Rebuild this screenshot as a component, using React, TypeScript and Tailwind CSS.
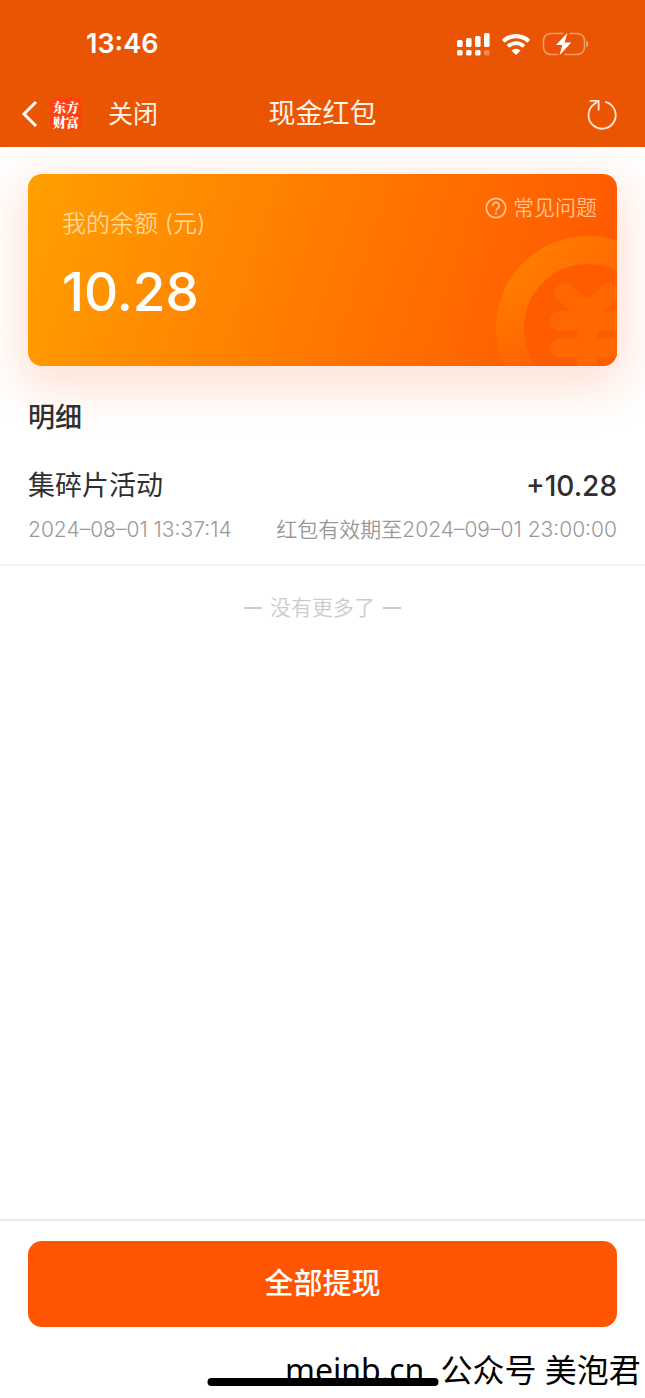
import type { ReactNode } from 'react';

const records = [
  {
    title: '集碎片活动',
    amount: '+10.28',
    time: '2024–08–01 13:37:14',
    expires: '红包有效期至2024–09–01 23:00:00',
  },
];

const signalBars = [
  { x: 0, y: 7, h: 7 },
  { x: 9, y: 5, h: 9 },
  { x: 18, y: 3, h: 11 },
  { x: 27, y: 0, h: 14 },
];

const SignalIcon = () => (
  <svg width="33" height="23" viewBox="0 0 33 23" fill="#fff">
    {signalBars.map((bar, i) => (
      <g key={bar.x}>
        <rect x={bar.x} y={bar.y} width="5.6" height={bar.h} rx="1.6" />
        <rect x={bar.x} y="17" width="5.6" height="5.6" rx="1.6" opacity={i === 3 ? 0.3 : 1} />
      </g>
    ))}
  </svg>
);

const WifiIcon = () => (
  <svg width="28" height="21" viewBox="0 0 28 21" fill="none" stroke="#fff">
    <path d="M1.2 7.2A18.6 18.6 0 0 1 26.8 7.2" strokeWidth="4.2" />
    <path d="M6 12.3A11.6 11.6 0 0 1 22 12.3" strokeWidth="3.8" />
    <path d="M9.4 16.6A6.4 6.4 0 0 1 18.6 16.6L14 21Z" fill="#fff" stroke="none" />
  </svg>
);

const BatteryIcon = () => (
  <svg width="47" height="24" viewBox="0 0 47 24" fill="none">
    <path
      d="M21.5 1.5H8.5A7 7 0 0 0 1.5 8.5V15.5A7 7 0 0 0 8.5 22.5H16M27.5 1.5H35.5A7 7 0 0 1 42.5 8.5V15.5A7 7 0 0 1 35.5 22.5H22.5"
      stroke="#fff"
      strokeOpacity="0.42"
      strokeWidth="1.6"
    />
    <path d="M44.4 8.6C46.8 9.6 46.8 14.4 44.4 15.4Z" fill="#fff" fillOpacity="0.5" />
    <path d="M4.5 8A3.5 3.5 0 0 1 8 4.5H19L11 14H17L14.5 19.5H8A3.5 3.5 0 0 1 4.5 16Z" fill="#f04e0c" />
    <path d="M25.5 0.8L14 13H20.3L17.6 23.2L29.2 10.6H22.6Z" fill="#fff" />
  </svg>
);

const RefreshIcon = () => (
  <svg width="30" height="31" viewBox="0 0 30 31" fill="none" stroke="#ffe6d2" strokeWidth="1.8">
    <path d="M18.2 2.9A13.6 13.6 0 1 1 7 5.2L11.2 2" />
    <path d="M2.6 1.9H11.6V11.4" />
  </svg>
);

const CoinMark = () => (
  <svg
    className="absolute bottom-0 right-0"
    width="121"
    height="130"
    viewBox="0 0 121 130"
    fill="none"
    aria-hidden="true"
  >
    <defs>
      <linearGradient id="coin-ring" x1="10" y1="30" x2="110" y2="90" gradientUnits="userSpaceOnUse">
        <stop stopColor="#ff7e00" />
        <stop offset="1" stopColor="#ff6800" />
      </linearGradient>
      <linearGradient id="coin-fade" x1="0" y1="50" x2="0" y2="130" gradientUnits="userSpaceOnUse">
        <stop stopColor="#fff" />
        <stop offset="1" stopColor="#fff" stopOpacity="0.3" />
      </linearGradient>
      <mask id="coin-mask" maskUnits="userSpaceOnUse" x="0" y="0" width="121" height="130">
        <rect width="121" height="130" fill="url(#coin-fade)" />
      </mask>
    </defs>
    <circle cx="92" cy="92" r="64" fill="#ff5c00" />
    <g mask="url(#coin-mask)">
      <circle cx="92" cy="92" r="78" stroke="url(#coin-ring)" strokeWidth="28" />
    </g>
    <path
      d="M69 57L91 76L113 57M64 85H121M64 112H121M91 74V130"
      stroke="#ff6800"
      strokeWidth="20"
      strokeLinecap="round"
      strokeLinejoin="round"
    />
  </svg>
);

const StatusBar = () => (
  <div className="flex h-20 items-center justify-between pl-[86px] pr-14 pt-2">
    <span className="font-['Inter'] text-[27px] font-semibold leading-8">13:46</span>
    <div className="flex items-center gap-3">
      <SignalIcon />
      <WifiIcon />
      <BatteryIcon />
    </div>
  </div>
);

const NavBar = () => (
  <nav className="grid h-[67px] grid-cols-[1fr_auto_1fr] items-center px-5 pt-px">
    <div className="flex items-center">
      <button type="button" aria-label="返回" className="flex items-center gap-3">
        <svg width="18" height="28" viewBox="0 0 18 28" fill="none" stroke="#fff" strokeWidth="3">
          <path d="M16 2L4 14L16 26" />
        </svg>
        <span className="flex size-8 items-center justify-center rounded-md bg-[#ff4310]">
          <span className="w-7 break-all text-center font-['Noto_Serif_CJK_SC','Noto_Sans_CJK_SC',sans-serif] text-[13px] font-black leading-[15px]">
            东方财富
          </span>
        </span>
      </button>
      <button type="button" className="ml-[26px] text-[25px] leading-9 text-[#fff3e6]">
        关闭
      </button>
    </div>
    <h1 className="text-[27px] leading-9 text-[#fff3e6]">现金红包</h1>
    <button type="button" aria-label="刷新" className="mr-2 justify-self-end">
      <RefreshIcon />
    </button>
  </nav>
);

const BalanceCard = () => (
  <section className="mx-7 mt-[27px] rounded-[14px] shadow-[0_14px_48px_8px_rgba(255,85,0,0.18)]">
    <div className="relative flex h-48 items-start justify-between overflow-hidden rounded-[14px] bg-linear-[108deg,#ffa000_0%,#ff7800_52%,#ff5500_100%] pl-[34px] pr-5">
      <CoinMark />
      <div className="pt-8">
        <p className="text-2xl font-[350] leading-9 text-[#ffd699]">我的余额 (元)</p>
        <p className="mt-4 font-['Inter'] text-[53px] font-medium leading-[68px] text-white">10.28</p>
      </div>
      <a
        href="#faq"
        className="relative mt-[18px] flex items-center gap-[6px] text-[21px] font-[350] leading-8 text-[#ffc599]"
      >
        <svg width="22" height="22" viewBox="0 0 22 22" fill="none" stroke="currentColor" strokeWidth="1.7">
          <circle cx="11" cy="11" r="9.7" />
          <path d="M7.8 8.8A3.2 3.2 0 1 1 12.7 11.4C11.5 12.2 11 12.6 11 14" />
          <path d="M11 15.3V17.2" />
        </svg>
        常见问题
      </a>
    </div>
  </section>
);

const Divider = ({ children }: { children: ReactNode }) => (
  <div className="flex items-center justify-center gap-2 text-[#ccc]">
    <span className="h-[2px] w-[18px] bg-current" />
    <span className="text-[21px] font-[350] leading-8">{children}</span>
    <span className="h-[2px] w-[18px] bg-current" />
  </div>
);

export default function App() {
  return (
    <div className="flex min-h-screen flex-col overflow-hidden bg-white font-['Inter','Noto_Sans_CJK_SC',sans-serif] text-[#2f2f2f]">
      <header className="relative z-10 bg-[#ea5504] text-white">
        <StatusBar />
        <NavBar />
      </header>

      <main className="flow-root flex-1">
        <BalanceCard />

        <h2 className="relative mt-8 px-7 text-[27px] font-medium leading-10">明细</h2>

        <ul className="mt-7">
          {records.map((record) => (
            <li key={record.time} className="border-b-2 border-[#f4f4f4] px-7 pb-[18px]">
              <div className="flex items-center justify-between leading-10">
                <span className="text-[27px]">{record.title}</span>
                <span className="text-[28px] font-medium">{record.amount}</span>
              </div>
              <div className="mt-2 flex items-center justify-between text-[21px] font-[350] leading-8 text-[#999]">
                <span>{record.time}</span>
                <span>{record.expires}</span>
              </div>
            </li>
          ))}
        </ul>

        <div className="mt-[26px]">
          <Divider>没有更多了</Divider>
        </div>
      </main>

      <footer className="border-t-2 border-[#ebebeb]">
        <div className="px-7 pt-5">
          <button
            type="button"
            className="h-[86px] w-full rounded-[14px] bg-[#ff5500] text-[29px] font-medium leading-10 text-white"
          >
            全部提现
          </button>
        </div>
        <div className="relative h-[71px] overflow-hidden">
          <p className="ml-[285px] mt-5 flex gap-4 whitespace-nowrap font-['Noto_Sans','Noto_Sans_CJK_SC',sans-serif] text-[32px] leading-[46px] text-black">
            <span>meinb.cn</span>
            <span>公众号 美泡君</span>
          </p>
          <div className="absolute bottom-3 left-1/2 h-2 w-[231px] -translate-x-1/2 rounded-full bg-black" />
        </div>
      </footer>
    </div>
  );
}
